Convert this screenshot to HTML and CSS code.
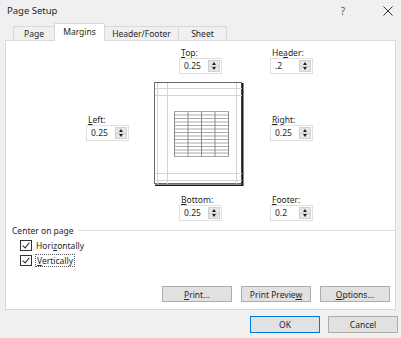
FILE: index.html
```html
<!DOCTYPE html>
<html>
  <head>
    <title>Page Setup</title>
    <link rel="stylesheet" href="styles.css">
  </head>
  <body>
    <div class="dialog">
      <div class="titlebar">
        <span class="title">Page Setup</span>
        <span class="help">?</span>
        <span class="close">
          <svg width="10" height="10" viewBox="0 0 10 10">
            <path d="M0.5 0.5 L9.5 9.5 M9.5 0.5 L0.5 9.5" stroke="#333" stroke-width="1" fill="none" />
          </svg>
        </span>
      </div>

      <div class="tabs">
        <div class="tab tab-page">Page</div>
        <div class="tab tab-margins selected">Margins</div>
        <div class="tab tab-hf">Header/Footer</div>
        <div class="tab tab-sheet">Sheet</div>
      </div>

      <div class="panel">
        <div class="margins">
          <div class="field f-top">
            <label><u>T</u>op:</label>
            <div class="spin"><span class="val">0.25</span><span class="arrows"><i class="up"></i><i class="down"></i></span></div>
          </div>
          <div class="field f-header">
            <label>He<u>a</u>der:</label>
            <div class="spin"><span class="val">.2</span><span class="arrows"><i class="up"></i><i class="down"></i></span></div>
          </div>

          <div class="field f-left">
            <label><u>L</u>eft:</label>
            <div class="spin"><span class="val">0.25</span><span class="arrows"><i class="up"></i><i class="down"></i></span></div>
          </div>
          <div class="preview">
            <svg width="90" height="104" viewBox="0 0 90 104">
              <rect x="0.5" y="0.5" width="87" height="101" fill="#fff" stroke="#6b6b6b" />
              <path d="M88.5 1 V103.5 H1" stroke="#1a1a1a" stroke-width="2" fill="none" />
              <!-- margin guides -->
              <path d="M3.5 1 V102 M13.5 1 V102 M82.5 1 V102 M1 6.5 H88 M1 13.5 H88 M1 91.5 H88 M1 98.5 H88" stroke="#d4d4d4" fill="none" />
              <!-- sheet grid -->
              <g stroke="#a8a8a8" fill="none">
                <path d="M20.5 29.5 H74.5 M20.5 33 H74.5 M20.5 36.5 H74.5 M20.5 40 H74.5 M20.5 43.5 H74.5 M20.5 47 H74.5 M20.5 50.5 H74.5 M20.5 54 H74.5 M20.5 57.5 H74.5 M20.5 61 H74.5 M20.5 64.5 H74.5 M20.5 68 H74.5 M20.5 71 H74.5 M20.5 74.5 H74.5" />
                <path d="M20.5 29.5 V74.5 M34 29.5 V74.5 M47.5 29.5 V74.5 M61 29.5 V74.5 M74.5 29.5 V74.5" stroke="#8a8a8a" />
              </g>
            </svg>
          </div>
          <div class="field f-right">
            <label><u>R</u>ight:</label>
            <div class="spin"><span class="val">0.25</span><span class="arrows"><i class="up"></i><i class="down"></i></span></div>
          </div>

          <div class="field f-bottom">
            <label><u>B</u>ottom:</label>
            <div class="spin"><span class="val">0.25</span><span class="arrows"><i class="up"></i><i class="down"></i></span></div>
          </div>
          <div class="field f-footer">
            <label><u>F</u>ooter:</label>
            <div class="spin"><span class="val">0.2</span><span class="arrows"><i class="up"></i><i class="down"></i></span></div>
          </div>
        </div>

        <div class="group">
          <div class="legend"><span>Center on page</span><span class="rule"></span></div>
          <div class="check"><span class="box"></span><span>Hori<u>z</u>ontally</span></div>
          <div class="check"><span class="box"></span><span class="focus"><u>V</u>ertically</span></div>
        </div>

        <div class="actions">
          <button class="btn"><u>P</u>rint...</button>
          <button class="btn">Print Previe<u>w</u></button>
          <button class="btn"><u>O</u>ptions...</button>
        </div>
      </div>

      <div class="footer">
        <button class="btn default">OK</button>
        <button class="btn">Cancel</button>
      </div>
    </div>
  </body>
</html>
```

FILE: styles.css
```css
body {
  margin: 0;
  background: #f0f0f0;
  font-family: "Noto Sans", "Open Sans", sans-serif;
  font-size: 8.5px;
  color: #262626;
}
.dialog {
  width: 401px;
  height: 338px;
  display: flex;
  flex-direction: column;
}
.titlebar {
  height: 23px;
  display: flex;
  align-items: center;
  padding: 0 8px 0 7px;
  box-sizing: border-box;
}
.title {
  font-size: 9.5px;
  flex: 1;
  margin-top: -2px;
}
.help {
  font-size: 10px;
  color: #555;
  margin-right: 38px;
  margin-top: -2px;
}
.close {
  display: flex;
  margin-top: -2px;
}
.tabs {
  display: flex;
  align-items: flex-end;
  height: 17px;
  padding-left: 13px;
}
.tab {
  height: 14px;
  line-height: 14px;
  text-align: center;
  border: 1px solid #d9d9d9;
  border-bottom: none;
  box-sizing: border-box;
  background: #f0f0f0;
}
.tab-page { width: 41px; border-right: none; }
.tab-margins { width: 51px; }
.tab-hf { width: 74px; border-left: none; }
.tab-sheet { width: 48px; border-left: none; }
.tab.selected {
  height: 18px;
  line-height: 16px;
  background: #fff;
  margin-bottom: -1px;
  position: relative;
  z-index: 1;
}
.panel {
  margin: 0 5px;
  height: 270px;
  background: #fff;
  border: 1px solid #d9d9d9;
  box-sizing: border-box;
  display: flex;
  flex-direction: column;
}
.margins {
  display: grid;
  grid-template-columns: 68px 90px auto;
  margin: 7px 0 0 80px;
}
.field label {
  display: block;
  height: 10px;
  line-height: 10px;
  padding-left: 2px;
}
.spin {
  display: flex;
  width: 43px;
  height: 16px;
  border: 1px solid #e0e0e0;
  box-sizing: border-box;
}
.val {
  flex: 1;
  padding-left: 4px;
  line-height: 14px;
}
.arrows {
  width: 12px;
  display: flex;
  flex-direction: column;
  margin: 1px 1px 1px 0;
}
.arrows i {
  flex: 1;
  background: #e6e6e6;
  border: 1px solid #d0d0d0;
  display: flex;
  align-items: center;
  justify-content: center;
}
.arrows i + i { border-top: none; }
.arrows i::after {
  content: "";
  border-left: 2.5px solid transparent;
  border-right: 2.5px solid transparent;
}
.arrows .up::after { border-bottom: 3px solid #222; }
.arrows .down::after { border-top: 3px solid #222; }
.f-top { grid-column: 2; margin-left: 25px; }
.f-header { grid-column: 3; margin-left: 26px; }
.f-left { grid-column: 1; align-self: center; margin-top: -4px; }
.preview { grid-column: 2; margin-top: 8px; height: 104px; }
.f-right { grid-column: 3; margin-left: 26px; align-self: center; margin-top: -4px; }
.f-bottom { grid-column: 2; margin-left: 25px; margin-top: 9px; }
.f-footer { grid-column: 3; margin-left: 26px; margin-top: 9px; }
.group {
  margin: 4px 0 0 6px;
}
.legend {
  display: flex;
  align-items: center;
  height: 10px;
  margin-bottom: 3px;
}
.rule {
  flex: 1;
  height: 1px;
  background: #dcdcdc;
  margin-left: 4px;
}
.check {
  display: flex;
  align-items: center;
  height: 15px;
  margin-left: 8px;
  gap: 4px;
}
.box {
  width: 12px;
  height: 11px;
  border: 1px solid #333;
  box-sizing: border-box;
  position: relative;
}
.box::after {
  content: "";
  position: absolute;
  left: 3px;
  top: 0;
  width: 3px;
  height: 6px;
  border: solid #222;
  border-width: 0 1px 1px 0;
  transform: rotate(40deg);
}
.focus {
  outline: 1px dotted #555;
  padding: 0 1px;
}
.actions {
  margin-top: auto;
  display: flex;
  justify-content: flex-end;
  gap: 9px;
  padding: 0 5px 7px 0;
}
.btn {
  width: 70px;
  height: 16px;
  padding: 0;
  font: inherit;
  color: #262626;
  background: #e1e1e1;
  border: 1px solid #adadad;
}
.footer {
  display: flex;
  justify-content: flex-end;
  gap: 8px;
  padding: 6px 3px 0 0;
}
.footer .btn {
  height: 17px;
}
.btn.default {
  border-color: #0078d7;
}
```
